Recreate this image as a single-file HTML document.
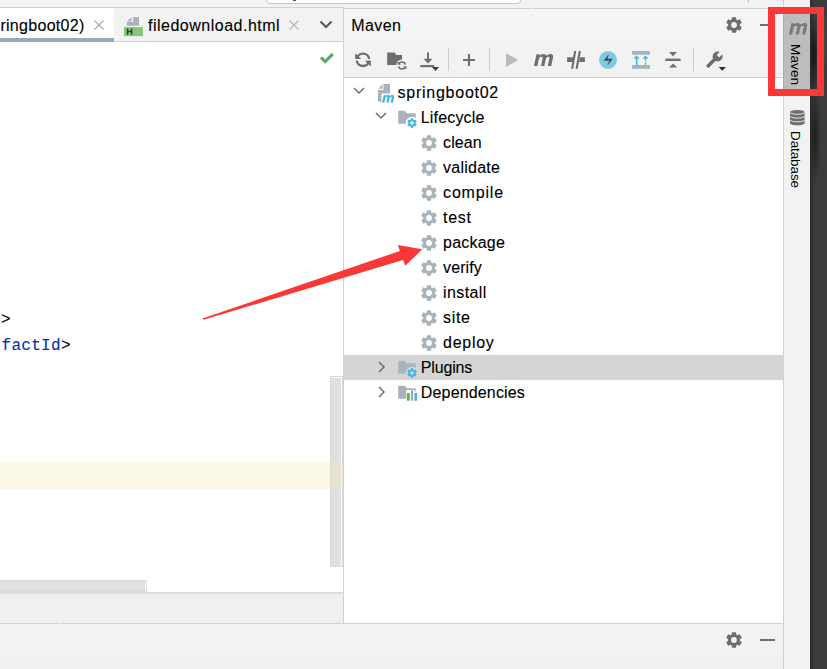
<!DOCTYPE html>
<html><head><meta charset="utf-8"><style>
*{margin:0;padding:0;box-sizing:border-box}
html,body{width:827px;height:669px;overflow:hidden;background:#f2f2f2;font-family:"Liberation Sans",sans-serif;font-size:16px;position:relative}
.a{position:absolute}
.t{position:absolute;line-height:16px;white-space:pre;font-size:16px;-webkit-text-stroke:0.12px currentColor}
.ic{position:absolute;overflow:visible}
</style></head><body>
<div class="a" style="left:266px;top:-10px;width:255px;height:14px;background:#fff;border:1px solid #c6c6c6;border-radius:4px"></div>
<div class="a" style="left:293px;top:0;width:3px;height:1px;background:#555"></div>
<div class="a" style="left:748px;top:0;width:1px;height:2px;background:#bbb"></div>
<!-- editor tab bar -->
<div class="a" style="left:0;top:7px;width:343px;height:1px;background:#d1d1d1"></div>
<div class="a" style="left:0;top:41px;width:343px;height:1px;background:#d1d1d1"></div>
<div class="a" style="left:0;top:8px;width:114px;height:34px;background:#fff"></div>
<div class="a" style="left:0;top:38px;width:114px;height:4px;background:#9ca7b8"></div>
<div class="t" style="left:0.4px;top:17.8px;letter-spacing:0.3px;color:#000;">ringboot02)</div>
<svg class="ic" style="left:94px;top:20px" width="10" height="10" viewBox="0 0 10 10"><path d="M0.5,0.5 L9.5,9.5 M9.5,0.5 L0.5,9.5" stroke="#aaaaaa" stroke-width="1.1"/></svg>
<svg class="ic" style="left:123px;top:16px" width="21" height="21" viewBox="0 0 21 21"><path d="M10.2,1 L16,1 L16,9.8 L3.9,9.8 L3.9,6 L10.2,6 Z" fill="#a9b4bc"/><path d="M4,5.6 L8.6,1.2 L8.6,5.6 Z" fill="#a9b4bc"/>
<rect x="1" y="11.1" width="19" height="9" fill="#87c67a"/>
<path d="M4.6,12.5 L4.6,18.8 M8.6,12.5 L8.6,18.8 M4.6,15.6 L8.6,15.6" stroke="#2f3b2f" stroke-width="1.5"/></svg>
<div class="t" style="left:148px;top:17.8px;letter-spacing:0.5px;color:#000;">filedownload.html</div>
<svg class="ic" style="left:289px;top:20px" width="10" height="10" viewBox="0 0 10 10"><path d="M0.5,0.5 L9.5,9.5 M9.5,0.5 L0.5,9.5" stroke="#b4b4b4" stroke-width="1.1"/></svg>
<svg class="ic" style="left:319px;top:19px" width="14" height="12" viewBox="0 0 14 12"><path d="M1.5,2.5 L7,8 L12.5,2.5" fill="none" stroke="#555" stroke-width="2"/></svg>
<!-- editor -->
<div class="a" style="left:0;top:42px;width:343px;height:550px;background:#fff"></div>
<svg class="ic" style="left:319px;top:52px" width="16" height="14" viewBox="0 0 16 14"><path d="M2,5.5 L6.2,9.6 L13.8,2" fill="none" stroke="#59a869" stroke-width="3.1"/></svg>
<div class="a" style="left:330px;top:376px;width:13px;height:191px;background:#fff;border:1px solid #d9d9d9"></div><div class="a" style="left:331px;top:378px;width:10px;height:188px;background:#e0e0e0"></div>
<div class="a" style="left:0;top:462px;width:343px;height:27px;background:rgba(245,235,180,0.3)"></div>
<div class="a" style="left:0;top:592px;width:343px;height:2px;background:#dcdcdc"></div>
<div class="a" style="left:0;top:594px;width:343px;height:29px;background:#f0f0f0"></div>
<div class="a" style="left:-1px;top:580px;width:148px;height:12px;background:#fff;border:1px solid #dadada"></div><div class="a" style="left:0;top:581px;width:145px;height:10px;background:#e0e0e0"></div>
<div class="t" style="left:1px;top:312px;font-family:'Liberation Mono',monospace;color:#000">&gt;</div>
<div class="t" style="left:1.5px;top:338px;letter-spacing:0.3px;font-family:'Liberation Mono',monospace;color:#0033b3">factId<span style="color:#000">&gt;</span></div>
<!-- divider -->
<div class="a" style="left:343px;top:7px;width:1px;height:616px;background:#d1d1d1"></div>
<!-- maven panel -->
<div class="a" style="left:344px;top:9px;width:439px;height:33px;background:#f4f4f4"></div><div class="a" style="left:344px;top:8px;width:439px;height:1px;background:#d1d1d1"></div><div class="a" style="left:531px;top:8px;width:1px;height:1px;background:#f2f2f2"></div>
<div class="a" style="left:344px;top:77px;width:439px;height:1px;background:#d1d1d1"></div>
<div class="a" style="left:344px;top:78px;width:439px;height:545px;background:#fff"></div>
<div class="a" style="left:344px;top:355px;width:439px;height:25px;background:#d5d5d5"></div>
<div class="t" style="left:351.2px;top:18.0px;letter-spacing:0.45px;color:#000;">Maven</div>
<svg class="ic" style="left:726px;top:17px" width="16" height="16" viewBox="0 0 16 16"><path fill="#6e6e6e" fill-rule="evenodd" d="M5.69,2.57 L6.04,0.14 L9.96,0.14 L10.31,2.57 L11.55,3.29 L13.83,2.37 L15.79,5.77 L13.86,7.28 L13.86,8.72 L15.79,10.23 L13.83,13.63 L11.55,12.71 L10.31,13.43 L9.96,15.86 L6.04,15.86 L5.69,13.43 L4.45,12.71 L2.17,13.63 L0.21,10.23 L2.14,8.72 L2.14,7.28 L0.21,5.77 L2.17,2.37 L4.45,3.29Z M10.90,8.00 A2.9,2.9 0 1,0 5.10,8.00 A2.9,2.9 0 1,0 10.90,8.00Z"/></svg>
<div class="a" style="left:759.5px;top:24px;width:15px;height:2px;background:#6e6e6e"></div>
<svg class="ic" style="left:355px;top:52px" width="16" height="16" viewBox="0 0 16 16"><path d="M1.7,6.9 A6.4,6.4 0 0 1 14.3,6.9" fill="none" stroke="#6e6e6e" stroke-width="2.4"/>
<path d="M14.3,8.7 A6.4,6.4 0 0 1 1.7,8.7" fill="none" stroke="#6e6e6e" stroke-width="2.4"/>
<path d="M0.2,1.5 L0.2,6.9 L6.3,6.9 Z" fill="#6e6e6e"/><path d="M15.8,14.6 L15.8,8.7 L9.8,8.7 Z" fill="#6e6e6e"/></svg><svg class="ic" style="left:386px;top:51px" width="22" height="22" viewBox="0 0 22 22"><defs><mask id="fr"><rect width="22" height="22" fill="#fff"/><circle cx="16" cy="14.4" r="5.8" fill="#000"/></mask></defs>
<path mask="url(#fr)" fill="#6e6e6e" d="M1.2,1.4 L8.5,1.4 L10.5,3.9 L16,3.9 L16,14 L1.2,14 Z"/>
<path d="M12.6,13.6 A3.5,3.5 0 0 1 19.4,13.6" fill="none" stroke="#6e6e6e" stroke-width="1.5"/>
<path d="M19.4,15.4 A3.5,3.5 0 0 1 12.6,15.4" fill="none" stroke="#6e6e6e" stroke-width="1.5"/>
<path d="M11.6,10.2 L11.6,13.6 L15,13.6 Z" fill="#6e6e6e"/><path d="M20.4,18.6 L20.4,15.4 L17,15.4 Z" fill="#6e6e6e"/></svg><svg class="ic" style="left:419px;top:51px" width="22" height="22" viewBox="0 0 22 22"><rect x="8" y="1.4" width="2" height="7" fill="#6e6e6e"/>
<path d="M4.4,7.7 L13.5,7.7 L9,12.4 Z" fill="#6e6e6e"/>
<rect x="1.3" y="14" width="14" height="2.2" fill="#6e6e6e"/>
<path d="M12.9,16 L20.1,16 L16.5,20 Z" fill="#3c3c3c"/></svg><div class="a" style="left:448px;top:48px;width:1px;height:23px;background:#cdcdcd"></div><div class="a" style="left:489px;top:48px;width:1px;height:23px;background:#cdcdcd"></div><div class="a" style="left:693px;top:48px;width:1px;height:23px;background:#cdcdcd"></div><div class="a" style="left:463px;top:58.7px;width:12.3px;height:2.3px;background:#6e6e6e"></div><div class="a" style="left:468px;top:53.8px;width:2.3px;height:12.4px;background:#6e6e6e"></div><svg class="ic" style="left:505px;top:52px" width="16" height="16" viewBox="0 0 16 16"><path d="M1,1.2 L13.2,8.1 L1,15 Z" fill="#b9b9b9"/></svg><svg class="ic" style="left:533.6px;top:53.6px" width="24" height="16" viewBox="0 0 24 16"><path fill="#6e6e6e" transform="scale(1.0) translate(0,12.1) skewX(-12) translate(0,-12.1)" d="M0,12.1 L0,0.3 L3.2,0.3 L3.2,1.5 Q4.5,0 7,0 Q9.6,0 10.2,1.8 Q11.6,0 14,0 Q17.2,0 17.2,3.5 L17.2,12.1 L13.8,12.1 L13.8,4.2 Q13.8,2.8 12.6,2.8 Q10.3,2.8 10.3,5 L10.3,12.1 L7,12.1 L7,4.2 Q7,2.8 5.8,2.8 Q3.3,2.8 3.3,5 L3.3,12.1 Z"/></svg><svg class="ic" style="left:566px;top:50px" width="20" height="20" viewBox="0 0 20 20"><rect x="1.1" y="7.3" width="6.6" height="4.7" fill="#6e6e6e"/><rect x="12" y="7.3" width="6.9" height="4.7" fill="#6e6e6e"/>
<path d="M13.85,1 L10.6,18.8" stroke="#f2f2f2" stroke-width="2.4"/>
<path d="M9.2,1 L6.1,18.8" stroke="#6e6e6e" stroke-width="2.1"/><path d="M13.85,1 L10.6,18.8" stroke="#6e6e6e" stroke-width="2.1"/></svg><svg class="ic" style="left:598px;top:50px" width="20" height="20" viewBox="0 0 20 20"><circle cx="10" cy="9.9" r="9" fill="#80c9e5"/>
<path d="M10.9,4.1 L5.5,10.7 L11.3,10.7 L9.1,15.9 L14.9,8.7 L9.5,8.7 Z" fill="#3d4b53"/></svg><svg class="ic" style="left:631px;top:50px" width="20" height="20" viewBox="0 0 20 20"><rect x="1" y="1" width="18" height="3.7" fill="#a8b3bb"/><rect x="1" y="15" width="18" height="3.8" fill="#a8b3bb"/>
<path d="M2.6,8.8 L5.6,5.3 L8.5,8.8 Z" fill="#40b6e0"/><rect x="4.9" y="8" width="1.5" height="7" fill="#40b6e0"/>
<path d="M11.6,8.8 L14.5,5.3 L17.3,8.8 Z" fill="#40b6e0"/><rect x="13.8" y="9.3" width="1.4" height="1.8" fill="#40b6e0"/><rect x="13.8" y="12.2" width="1.4" height="2.6" fill="#40b6e0"/></svg><svg class="ic" style="left:664px;top:50px" width="18" height="20" viewBox="0 0 18 20"><path d="M5,2.1 L13,2.1 L9,6.3 Z" fill="#6e6e6e"/><rect x="1.4" y="8.6" width="15.2" height="2.4" fill="#6e6e6e"/><path d="M5,17.6 L13.2,17.6 L9.1,13.4 Z" fill="#6e6e6e"/></svg><svg class="ic" style="left:704px;top:50px" width="24" height="22" viewBox="0 0 24 22"><defs><mask id="wr"><rect x="-2" y="-2" width="28" height="26" fill="#fff"/><path d="M15.1,7.4 L12.7,5 L17.35,0.35 L19.75,2.75 Z" fill="#000"/></mask></defs>
<g mask="url(#wr)"><circle cx="13.6" cy="6.5" r="5" fill="#6e6e6e"/><path d="M3.15,16.95 L11,9.1" stroke="#6e6e6e" stroke-width="3.5"/></g>
<path d="M14.7,17.1 L21.9,17.1 L18.3,20.8 Z" fill="#2b2b2b"/></svg>
<div class="t" style="left:397.6px;top:85.0px;letter-spacing:0.74px;color:#000;">springboot02</div><div class="t" style="left:420.8px;top:110.0px;letter-spacing:0.16px;color:#000;">Lifecycle</div><div class="t" style="left:443.1px;top:135.0px;letter-spacing:0.1px;color:#000;">clean</div><svg class="ic" style="left:421px;top:135px" width="16" height="16" viewBox="0 0 16 16"><path fill="#a8b3bb" fill-rule="evenodd" d="M5.69,2.57 L6.04,0.14 L9.96,0.14 L10.31,2.57 L11.55,3.29 L13.83,2.37 L15.79,5.77 L13.86,7.28 L13.86,8.72 L15.79,10.23 L13.83,13.63 L11.55,12.71 L10.31,13.43 L9.96,15.86 L6.04,15.86 L5.69,13.43 L4.45,12.71 L2.17,13.63 L0.21,10.23 L2.14,8.72 L2.14,7.28 L0.21,5.77 L2.17,2.37 L4.45,3.29Z M10.90,8.00 A2.9,2.9 0 1,0 5.10,8.00 A2.9,2.9 0 1,0 10.90,8.00Z"/></svg><div class="t" style="left:443.1px;top:160.0px;letter-spacing:0.24px;color:#000;">validate</div><svg class="ic" style="left:421px;top:160px" width="16" height="16" viewBox="0 0 16 16"><path fill="#a8b3bb" fill-rule="evenodd" d="M5.69,2.57 L6.04,0.14 L9.96,0.14 L10.31,2.57 L11.55,3.29 L13.83,2.37 L15.79,5.77 L13.86,7.28 L13.86,8.72 L15.79,10.23 L13.83,13.63 L11.55,12.71 L10.31,13.43 L9.96,15.86 L6.04,15.86 L5.69,13.43 L4.45,12.71 L2.17,13.63 L0.21,10.23 L2.14,8.72 L2.14,7.28 L0.21,5.77 L2.17,2.37 L4.45,3.29Z M10.90,8.00 A2.9,2.9 0 1,0 5.10,8.00 A2.9,2.9 0 1,0 10.90,8.00Z"/></svg><div class="t" style="left:443.1px;top:185.0px;letter-spacing:0.8px;color:#000;">compile</div><svg class="ic" style="left:421px;top:185px" width="16" height="16" viewBox="0 0 16 16"><path fill="#a8b3bb" fill-rule="evenodd" d="M5.69,2.57 L6.04,0.14 L9.96,0.14 L10.31,2.57 L11.55,3.29 L13.83,2.37 L15.79,5.77 L13.86,7.28 L13.86,8.72 L15.79,10.23 L13.83,13.63 L11.55,12.71 L10.31,13.43 L9.96,15.86 L6.04,15.86 L5.69,13.43 L4.45,12.71 L2.17,13.63 L0.21,10.23 L2.14,8.72 L2.14,7.28 L0.21,5.77 L2.17,2.37 L4.45,3.29Z M10.90,8.00 A2.9,2.9 0 1,0 5.10,8.00 A2.9,2.9 0 1,0 10.90,8.00Z"/></svg><div class="t" style="left:443.1px;top:210.0px;letter-spacing:0.67px;color:#000;">test</div><svg class="ic" style="left:421px;top:210px" width="16" height="16" viewBox="0 0 16 16"><path fill="#a8b3bb" fill-rule="evenodd" d="M5.69,2.57 L6.04,0.14 L9.96,0.14 L10.31,2.57 L11.55,3.29 L13.83,2.37 L15.79,5.77 L13.86,7.28 L13.86,8.72 L15.79,10.23 L13.83,13.63 L11.55,12.71 L10.31,13.43 L9.96,15.86 L6.04,15.86 L5.69,13.43 L4.45,12.71 L2.17,13.63 L0.21,10.23 L2.14,8.72 L2.14,7.28 L0.21,5.77 L2.17,2.37 L4.45,3.29Z M10.90,8.00 A2.9,2.9 0 1,0 5.10,8.00 A2.9,2.9 0 1,0 10.90,8.00Z"/></svg><div class="t" style="left:443.1px;top:235.0px;letter-spacing:0.2px;color:#000;">package</div><svg class="ic" style="left:421px;top:235px" width="16" height="16" viewBox="0 0 16 16"><path fill="#a8b3bb" fill-rule="evenodd" d="M5.69,2.57 L6.04,0.14 L9.96,0.14 L10.31,2.57 L11.55,3.29 L13.83,2.37 L15.79,5.77 L13.86,7.28 L13.86,8.72 L15.79,10.23 L13.83,13.63 L11.55,12.71 L10.31,13.43 L9.96,15.86 L6.04,15.86 L5.69,13.43 L4.45,12.71 L2.17,13.63 L0.21,10.23 L2.14,8.72 L2.14,7.28 L0.21,5.77 L2.17,2.37 L4.45,3.29Z M10.90,8.00 A2.9,2.9 0 1,0 5.10,8.00 A2.9,2.9 0 1,0 10.90,8.00Z"/></svg><div class="t" style="left:443.1px;top:260.0px;letter-spacing:0.1px;color:#000;">verify</div><svg class="ic" style="left:421px;top:260px" width="16" height="16" viewBox="0 0 16 16"><path fill="#a8b3bb" fill-rule="evenodd" d="M5.69,2.57 L6.04,0.14 L9.96,0.14 L10.31,2.57 L11.55,3.29 L13.83,2.37 L15.79,5.77 L13.86,7.28 L13.86,8.72 L15.79,10.23 L13.83,13.63 L11.55,12.71 L10.31,13.43 L9.96,15.86 L6.04,15.86 L5.69,13.43 L4.45,12.71 L2.17,13.63 L0.21,10.23 L2.14,8.72 L2.14,7.28 L0.21,5.77 L2.17,2.37 L4.45,3.29Z M10.90,8.00 A2.9,2.9 0 1,0 5.10,8.00 A2.9,2.9 0 1,0 10.90,8.00Z"/></svg><div class="t" style="left:443.1px;top:285.0px;letter-spacing:0.38px;color:#000;">install</div><svg class="ic" style="left:421px;top:285px" width="16" height="16" viewBox="0 0 16 16"><path fill="#a8b3bb" fill-rule="evenodd" d="M5.69,2.57 L6.04,0.14 L9.96,0.14 L10.31,2.57 L11.55,3.29 L13.83,2.37 L15.79,5.77 L13.86,7.28 L13.86,8.72 L15.79,10.23 L13.83,13.63 L11.55,12.71 L10.31,13.43 L9.96,15.86 L6.04,15.86 L5.69,13.43 L4.45,12.71 L2.17,13.63 L0.21,10.23 L2.14,8.72 L2.14,7.28 L0.21,5.77 L2.17,2.37 L4.45,3.29Z M10.90,8.00 A2.9,2.9 0 1,0 5.10,8.00 A2.9,2.9 0 1,0 10.90,8.00Z"/></svg><div class="t" style="left:443.1px;top:310.0px;letter-spacing:0.63px;color:#000;">site</div><svg class="ic" style="left:421px;top:310px" width="16" height="16" viewBox="0 0 16 16"><path fill="#a8b3bb" fill-rule="evenodd" d="M5.69,2.57 L6.04,0.14 L9.96,0.14 L10.31,2.57 L11.55,3.29 L13.83,2.37 L15.79,5.77 L13.86,7.28 L13.86,8.72 L15.79,10.23 L13.83,13.63 L11.55,12.71 L10.31,13.43 L9.96,15.86 L6.04,15.86 L5.69,13.43 L4.45,12.71 L2.17,13.63 L0.21,10.23 L2.14,8.72 L2.14,7.28 L0.21,5.77 L2.17,2.37 L4.45,3.29Z M10.90,8.00 A2.9,2.9 0 1,0 5.10,8.00 A2.9,2.9 0 1,0 10.90,8.00Z"/></svg><div class="t" style="left:443.1px;top:335.0px;letter-spacing:0.7px;color:#000;">deploy</div><svg class="ic" style="left:421px;top:335px" width="16" height="16" viewBox="0 0 16 16"><path fill="#a8b3bb" fill-rule="evenodd" d="M5.69,2.57 L6.04,0.14 L9.96,0.14 L10.31,2.57 L11.55,3.29 L13.83,2.37 L15.79,5.77 L13.86,7.28 L13.86,8.72 L15.79,10.23 L13.83,13.63 L11.55,12.71 L10.31,13.43 L9.96,15.86 L6.04,15.86 L5.69,13.43 L4.45,12.71 L2.17,13.63 L0.21,10.23 L2.14,8.72 L2.14,7.28 L0.21,5.77 L2.17,2.37 L4.45,3.29Z M10.90,8.00 A2.9,2.9 0 1,0 5.10,8.00 A2.9,2.9 0 1,0 10.90,8.00Z"/></svg><div class="t" style="left:420.8px;top:360.0px;letter-spacing:-0.17px;color:#000;">Plugins</div><div class="t" style="left:420.8px;top:385.0px;letter-spacing:0.16px;color:#000;">Dependencies</div><svg class="ic" style="left:353px;top:87.4px" width="12" height="8" viewBox="0 0 12 8"><path d="M1,1 L6,6 L11,1" fill="none" stroke="#6e6e6e" stroke-width="1.5"/></svg><svg class="ic" style="left:375px;top:112.4px" width="12" height="8" viewBox="0 0 12 8"><path d="M1,1 L6,6 L11,1" fill="none" stroke="#6e6e6e" stroke-width="1.5"/></svg><svg class="ic" style="left:377.5px;top:361px" width="8" height="12" viewBox="0 0 8 12"><path d="M1,1 L6,6 L1,11" fill="none" stroke="#6e6e6e" stroke-width="1.5"/></svg><svg class="ic" style="left:377.5px;top:386px" width="8" height="12" viewBox="0 0 8 12"><path d="M1,1 L6,6 L1,11" fill="none" stroke="#6e6e6e" stroke-width="1.5"/></svg><svg class="ic" style="left:376px;top:82px" width="20" height="22" viewBox="0 0 20 22"><path fill="#a8b3bb" d="M7.5,2 L14,2 L14,11.6 L12.5,11.6 L5.5,11.6 L5.5,19.7 L2,19.7 L2,8 L7.5,8 Z"/>
<path fill="#a8b3bb" d="M2.3,6.8 L6.6,2.3 L6.6,6.8 Z"/>
<path fill="#40b6e0" stroke="#40b6e0" stroke-width="0.35" transform="translate(6.2,13.1) scale(0.62) translate(0,12.1) skewX(-12) translate(0,-12.1)" d="M0,12.1 L0,0.3 L3.2,0.3 L3.2,1.5 Q4.5,0 7,0 Q9.6,0 10.2,1.8 Q11.6,0 14,0 Q17.2,0 17.2,3.5 L17.2,12.1 L13.8,12.1 L13.8,4.2 Q13.8,2.8 12.6,2.8 Q10.3,2.8 10.3,5 L10.3,12.1 L7,12.1 L7,4.2 Q7,2.8 5.8,2.8 Q3.3,2.8 3.3,5 L3.3,12.1 Z"/></svg><svg class="ic" style="left:396px;top:110px" width="22" height="20" viewBox="0 0 22 20"><defs><mask id="m110"><rect width="22" height="20" fill="#fff"/><circle cx="16" cy="13" r="6.2" fill="#000"/></mask></defs>
<path mask="url(#m110)" fill="#a8b3bb" d="M2.2,0.7 L8.6,0.7 L10.8,3.3 L19.7,3.3 L19.7,13.7 L2.2,13.7 Z"/>
<path fill="#40b6e0" fill-rule="evenodd" transform="translate(16 13)" d="M-1.42,-3.20 L-1.19,-4.75 L1.19,-4.75 L1.42,-3.20 L2.06,-2.83 L3.52,-3.40 L4.71,-1.35 L3.48,-0.37 L3.48,0.37 L4.71,1.35 L3.52,3.40 L2.06,2.83 L1.42,3.20 L1.19,4.75 L-1.19,4.75 L-1.42,3.20 L-2.06,2.83 L-3.52,3.40 L-4.71,1.35 L-3.48,0.37 L-3.48,-0.37 L-4.71,-1.35 L-3.52,-3.40 L-2.06,-2.83Z M1.80,0.00 A1.8,1.8 0 1,0 -1.80,0.00 A1.8,1.8 0 1,0 1.80,0.00Z"/></svg><svg class="ic" style="left:396px;top:360px" width="22" height="20" viewBox="0 0 22 20"><defs><mask id="m360"><rect width="22" height="20" fill="#fff"/><circle cx="16" cy="13" r="6.2" fill="#000"/></mask></defs>
<path mask="url(#m360)" fill="#a8b3bb" d="M2.2,0.7 L8.6,0.7 L10.8,3.3 L19.7,3.3 L19.7,13.7 L2.2,13.7 Z"/>
<path fill="#40b6e0" fill-rule="evenodd" transform="translate(16 13)" d="M-1.42,-3.20 L-1.19,-4.75 L1.19,-4.75 L1.42,-3.20 L2.06,-2.83 L3.52,-3.40 L4.71,-1.35 L3.48,-0.37 L3.48,0.37 L4.71,1.35 L3.52,3.40 L2.06,2.83 L1.42,3.20 L1.19,4.75 L-1.19,4.75 L-1.42,3.20 L-2.06,2.83 L-3.52,3.40 L-4.71,1.35 L-3.48,0.37 L-3.48,-0.37 L-4.71,-1.35 L-3.52,-3.40 L-2.06,-2.83Z M1.80,0.00 A1.8,1.8 0 1,0 -1.80,0.00 A1.8,1.8 0 1,0 1.80,0.00Z"/></svg><svg class="ic" style="left:396px;top:385px" width="22" height="20" viewBox="0 0 22 20"><path fill="#a8b3bb" d="M2.2,0.7 L8.6,0.7 L10.8,3.3 L19.7,3.3 L19.7,6.5 L18.3,6.5 L18.3,5 L10.2,5 L10.2,13.7 L2.2,13.7 Z"/>
<rect x="10.9" y="8" width="2.9" height="7.7" fill="#62b543"/>
<rect x="15" y="5.5" width="2" height="10.2" fill="#9aa7b0"/>
<rect x="18.4" y="8" width="2.6" height="7.7" fill="#40b6e0"/></svg>
<!-- bottom -->
<div class="a" style="left:0;top:624px;width:783px;height:33px;background:#f3f3f3"></div><div class="a" style="left:0;top:657px;width:783px;height:12px;background:#f1f1f1"></div><div class="a" style="left:0;top:623px;width:783px;height:1px;background:#d1d1d1"></div><div class="a" style="left:60px;top:623px;width:1px;height:1px;background:#f3f3f3"></div>
<svg class="ic" style="left:726px;top:632px" width="16" height="16" viewBox="0 0 16 16"><path fill="#6e6e6e" fill-rule="evenodd" d="M5.69,2.57 L6.04,0.14 L9.96,0.14 L10.31,2.57 L11.55,3.29 L13.83,2.37 L15.79,5.77 L13.86,7.28 L13.86,8.72 L15.79,10.23 L13.83,13.63 L11.55,12.71 L10.31,13.43 L9.96,15.86 L6.04,15.86 L5.69,13.43 L4.45,12.71 L2.17,13.63 L0.21,10.23 L2.14,8.72 L2.14,7.28 L0.21,5.77 L2.17,2.37 L4.45,3.29Z M10.90,8.00 A2.9,2.9 0 1,0 5.10,8.00 A2.9,2.9 0 1,0 10.90,8.00Z"/></svg>
<div class="a" style="left:759.5px;top:639px;width:15.5px;height:2px;background:#6e6e6e"></div>
<!-- right stripe -->
<div class="a" style="left:783px;top:0;width:1px;height:669px;background:#d1d1d1"></div>
<div class="a" style="left:783px;top:8px;width:27px;height:81px;background:#bdbdbd;border-left:1px solid #acacac"></div>
<svg class="ic" style="left:789px;top:23.3px" width="24" height="16" viewBox="0 0 24 16"><path fill="#7a7a7a" transform="scale(0.95) translate(0,12.1) skewX(-12) translate(0,-12.1)" d="M0,12.1 L0,0.3 L3.2,0.3 L3.2,1.5 Q4.5,0 7,0 Q9.6,0 10.2,1.8 Q11.6,0 14,0 Q17.2,0 17.2,3.5 L17.2,12.1 L13.8,12.1 L13.8,4.2 Q13.8,2.8 12.6,2.8 Q10.3,2.8 10.3,5 L10.3,12.1 L7,12.1 L7,4.2 Q7,2.8 5.8,2.8 Q3.3,2.8 3.3,5 L3.3,12.1 Z"/></svg>
<div class="a" style="left:788px;top:43.5px;writing-mode:vertical-rl;font-size:13.5px;line-height:14px;color:#000;white-space:pre;letter-spacing:0.15px">Maven</div>
<svg class="ic" style="left:790px;top:110px" width="15" height="16" viewBox="0 0 15 16"><path d="M0,2 A7.3,2 0 0 1 14.6,2 L14.6,13.3 A7.3,2 0 0 1 0,13.3 Z" fill="#6e6e6e"/>
<path d="M0,2.3 A7.3,2 0 0 0 14.6,2.3 M0,6.1 A7.3,2 0 0 0 14.6,6.1 M0,9.8 A7.3,2 0 0 0 14.6,9.8" fill="none" stroke="#f2f2f2" stroke-width="0.9"/></svg>
<div class="a" style="left:788px;top:131px;writing-mode:vertical-rl;font-size:13.5px;line-height:14px;color:#000;white-space:pre;letter-spacing:-0.1px">Database</div>
<div class="a" style="left:810px;top:0;width:17px;height:669px;background:radial-gradient(5px 40px at 4px 55px,#151515,rgba(20,20,20,0)),radial-gradient(6px 50px at 5px 135px,#1e1e1e,rgba(30,30,30,0)),radial-gradient(6px 40px at 12px 40px,#4a4a4a,rgba(74,74,74,0)),linear-gradient(90deg,#2a2a2a 0,#333 2px,#3a3b3d 5px,#3b3c3e 100%)"></div>
<!-- red box -->
<div class="a" style="left:768px;top:7px;width:56px;height:89px;border:7px solid #fb3838"></div>
<!-- arrow -->
<svg class="ic" style="left:0;top:0" width="827" height="669"><path fill="#fb3838" d="M203.1,318.2 L399.8,251 L397.9,245.1 L422.4,249.2 L405.2,265.7 L403,260.1 L203.6,319.8 Q202.4,319.4 203.1,318.2 Z"/></svg>
</body></html>
